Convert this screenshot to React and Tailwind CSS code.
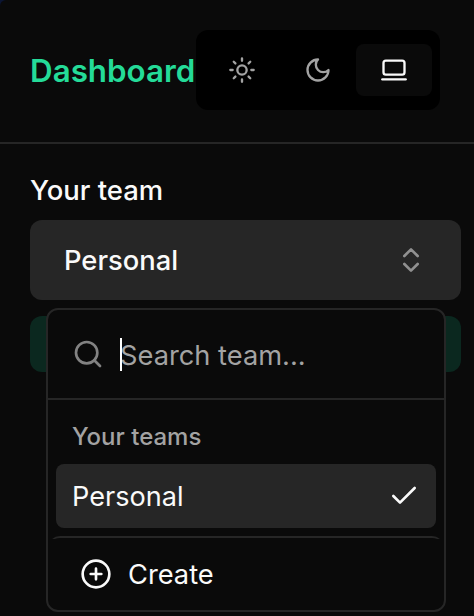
import React from "react";

function Icon({ size = 32, className = "", children }) {
  return (
    <svg
      width={size}
      height={size}
      viewBox="0 0 24 24"
      fill="none"
      stroke="currentColor"
      strokeWidth="2"
      strokeLinecap="round"
      strokeLinejoin="round"
      className={`shrink-0 ${className}`}
    >
      {children}
    </svg>
  );
}

function ThemeSwitcher() {
  return (
    <div className="flex h-20 w-[244px] shrink-0 items-center rounded-xl bg-black px-2 text-[#a3a3a3]">
      <button className="flex h-[52px] w-[76px] items-center justify-center rounded-lg">
        <Icon size={28}>
          <circle cx="12" cy="12" r="4" />
          <path d="M12 2v2M12 20v2M4.93 4.93l1.41 1.41M17.66 17.66l1.41 1.41M2 12h2M20 12h2M6.34 17.66l-1.41 1.41M19.07 4.93l-1.41 1.41" />
        </Icon>
      </button>
      <button className="flex h-[52px] w-[76px] items-center justify-center rounded-lg">
        <Icon size={28}>
          <path d="M12 3a6 6 0 0 0 9 9 9 9 0 1 1-9-9Z" />
        </Icon>
      </button>
      <button className="flex h-[52px] w-[76px] items-center justify-center rounded-lg bg-[#0a0a0a] text-[#fafafa]">
        <Icon size={28}>
          <rect width="18" height="12" x="3" y="4" rx="2" />
          <path d="M2 20h20" />
        </Icon>
      </button>
    </div>
  );
}

function TeamMenu() {
  return (
    <div className="absolute top-[88px] left-4 h-[304px] w-[400px] overflow-hidden rounded-xl border-2 border-[#262626] bg-[#0a0a0a]">
      <div className="flex h-[90px] items-center border-b-2 border-[#262626] px-6">
        <Icon className="mr-4 text-[#828282]">
          <circle cx="11" cy="11" r="8" />
          <path d="m21 21-4.3-4.3" />
        </Icon>
        <div className="relative mt-[3px] text-[27.25px] leading-10 text-[#a3a3a3]">
          <span className="absolute top-0.5 left-0 h-[33px] w-0.5 bg-white" />
          Search team...
        </div>
      </div>
      <div className="px-2 pt-2">
        <div className="flex h-14 items-center px-4 pt-0.5 text-2xl font-medium text-[#a3a3a3]">Your teams</div>
        <div className="flex h-16 items-center justify-between rounded-lg bg-[#262626] px-4 text-[27.1px] leading-10">
          <span className="pt-px">Personal</span>
          <Icon>
            <path d="M20 6 9 17l-5-5" />
          </Icon>
        </div>
      </div>
      <div className="mt-2 h-[3px] overflow-hidden">
        <div className="h-[74px] rounded-xl border-t-2 border-[#262626]" />
      </div>
      <div className="flex h-[71px] items-center gap-4 px-8 pb-px text-[27.25px] leading-10">
        <Icon>
          <circle cx="12" cy="12" r="10" />
          <path d="M8 12h8M12 8v8" />
        </Icon>
        <span className="pt-0.5">Create</span>
      </div>
    </div>
  );
}

export default function App() {
  return (
    <div className="h-[616px] w-[474px] overflow-hidden bg-[#0b1533] font-['Inter',sans-serif] text-[#fafafa]">
      <div className="h-full rounded-tl-[6px] bg-[#0a0a0a]">
        <header className="flex h-36 items-center border-b-2 border-[#262626] pb-0.5 pl-[30px]">
          <h1 className="w-[166px] pt-px text-[31.35px] leading-10 font-semibold whitespace-nowrap text-[#24db98]">Dashboard</h1>
          <ThemeSwitcher />
        </header>
        <main className="pt-6 pl-[30px]">
          <div className="h-[52px] text-[27.45px] leading-[44px] font-medium">Your team</div>
          <div className="relative w-[431px]">
            <button className="flex h-20 w-full items-center justify-between rounded-xl bg-[#262626] px-[34px] text-[27.35px] leading-10 font-medium">
              <span className="pt-0.5">Personal</span>
              <Icon className="text-[#909090]">
                <path d="m7 15 5 5 5-5M7 9l5-5 5 5" />
              </Icon>
            </button>
            <div className="mt-4 h-14 rounded-xl bg-[#0b281f]" />
            <TeamMenu />
          </div>
        </main>
      </div>
    </div>
  );
}
